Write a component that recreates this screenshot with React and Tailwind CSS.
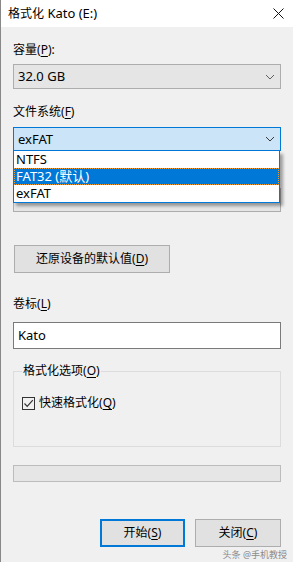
import React from 'react';

const font = { fontFamily: '"Segoe UI", "Noto Sans", "Noto Sans CJK SC", sans-serif' };

const Key = ({ k }) => (
  <>
    (<u className="underline underline-offset-2 decoration-1">{k}</u>)
  </>
);

const Chevron = ({ color = '#606060' }) => (
  <svg width="10" height="6" viewBox="0 0 10 6" className="shrink-0">
    <path d="M1 1 L5 5 L9 1" fill="none" stroke={color} strokeWidth="1" />
  </svg>
);

const Combo = ({ value, active, className = '' }) => (
  <div
    className={`flex items-center justify-between pl-[4px] pr-[5px] border text-[13px] text-black ${
      active ? 'bg-[#cce4f7] border-[#0078d7]' : 'bg-[#e5e5e5] border-[#adadad]'
    } ${className}`}
  >
    <span className="leading-none">{value}</span>
    <Chevron color={active ? '#3a3a3a' : '#606060'} />
  </div>
);

export default function App() {
  const options = ['NTFS', 'FAT32 (默认)', 'exFAT'];

  return (
    <div style={font} className="relative w-[293px] h-[562px] bg-[#f0f0f0] border-l border-[#888888] overflow-hidden select-none">
      {/* Title bar */}
      <div className="h-[27px] bg-white flex items-center justify-between pl-[7px] pr-[9px]">
        <span className="text-[13px] text-black leading-none">
          <span className="text-[12px]">格式化</span> Kato (E:)
        </span>
        <svg width="11" height="11" viewBox="0 0 11 11">
          <path d="M0.5 0.5 L10.5 10.5 M10.5 0.5 L0.5 10.5" stroke="#111" strokeWidth="1" />
        </svg>
      </div>

      {/* Body */}
      <div className="flex flex-col pl-[12px] w-[280px] text-[12px] text-black">
        <div className="mt-[15px] h-[16px] leading-[16px]">
          容量<Key k="P" />:
        </div>
        <Combo value="32.0 GB" className="mt-[6px] h-[25px]" />

        <div className="mt-[15px] h-[16px] leading-[16px]">
          文件系统<Key k="F" />
        </div>
        <div className="relative mt-[7px]">
          <Combo value="exFAT" active className="h-[24px]" />
          {/* open dropdown list */}
          <div className="absolute left-0 top-full z-10 w-[267px] bg-white border border-t-0 border-[#0078d7] shadow-[3px_3px_3px_rgba(0,0,0,0.35)]">
            {options.map((o, i) => (
              <div
                key={o}
                className={`h-[17px] leading-[17px] pl-[2px] text-[13px] ${
                  i === 1
                    ? 'bg-[#0078d7] text-white outline outline-1 outline-dotted outline-[#f0a030] -outline-offset-1'
                    : 'text-black'
                }`}
              >
                {o}
              </div>
            ))}
          </div>
        </div>

        {/* allocation unit field, hidden behind the dropdown */}
        <div className="mt-[15px] h-[16px]" />
        <div className="mt-[6px] h-[24px] bg-[#e5e5e5] border border-[#adadad]" />

        <button className="mt-[33px] ml-[1px] w-[156px] h-[28px] bg-[#e1e1e1] border border-[#adadad] text-[12px] text-black leading-none">
          还原设备的默认值<Key k="D" />
        </button>

        <div className="mt-[23px] h-[16px] leading-[16px]">
          卷标<Key k="L" />
        </div>
        <div className="mt-[10px] h-[27px] bg-white border border-[#7a7a7a] flex items-center pl-[4px]">
          <span className="leading-none text-[13px]">Kato</span>
        </div>

        {/* Group box */}
        <div className="relative mt-[22px] h-[76px] border border-[#dcdcdc]">
          <span className="absolute -top-[9px] left-[8px] px-[1px] bg-[#f0f0f0] leading-[16px]">
            格式化选项<Key k="O" />
          </span>
          <div className="flex items-center gap-[4px] mt-[23px] ml-[8px]">
            <div className="w-[13px] h-[13px] border border-[#333333] bg-[#f0f0f0] flex items-center justify-center">
              <svg width="11" height="11" viewBox="0 0 11 11">
                <path d="M1.5 5.5 L4.2 8.3 L9.8 2.2" fill="none" stroke="#333" strokeWidth="1.2" />
              </svg>
            </div>
            <span className="leading-[16px]">
              快速格式化<Key k="Q" />
            </span>
          </div>
        </div>

        {/* Progress bar */}
        <div className="mt-[18px] h-[17px] bg-[#e6e6e6] border border-[#bcbcbc]" />

        {/* Buttons */}
        <div className="mt-[37px] flex justify-end gap-[10px]">
          <button className="w-[85px] h-[28px] bg-[#e1e1e1] border-2 border-[#0078d7] text-[12px] text-black leading-none">
            开始<Key k="S" />
          </button>
          <button className="w-[86px] h-[28px] bg-[#e1e1e1] border border-[#adadad] text-[12px] text-black leading-none">
            关闭<Key k="C" />
          </button>
        </div>
      </div>

      {/* watermark */}
      <div className="absolute right-[6px] bottom-[3px] text-[9px] leading-none text-[#8a8a8a]">
        头条 @手机教授
      </div>
    </div>
  );
}
